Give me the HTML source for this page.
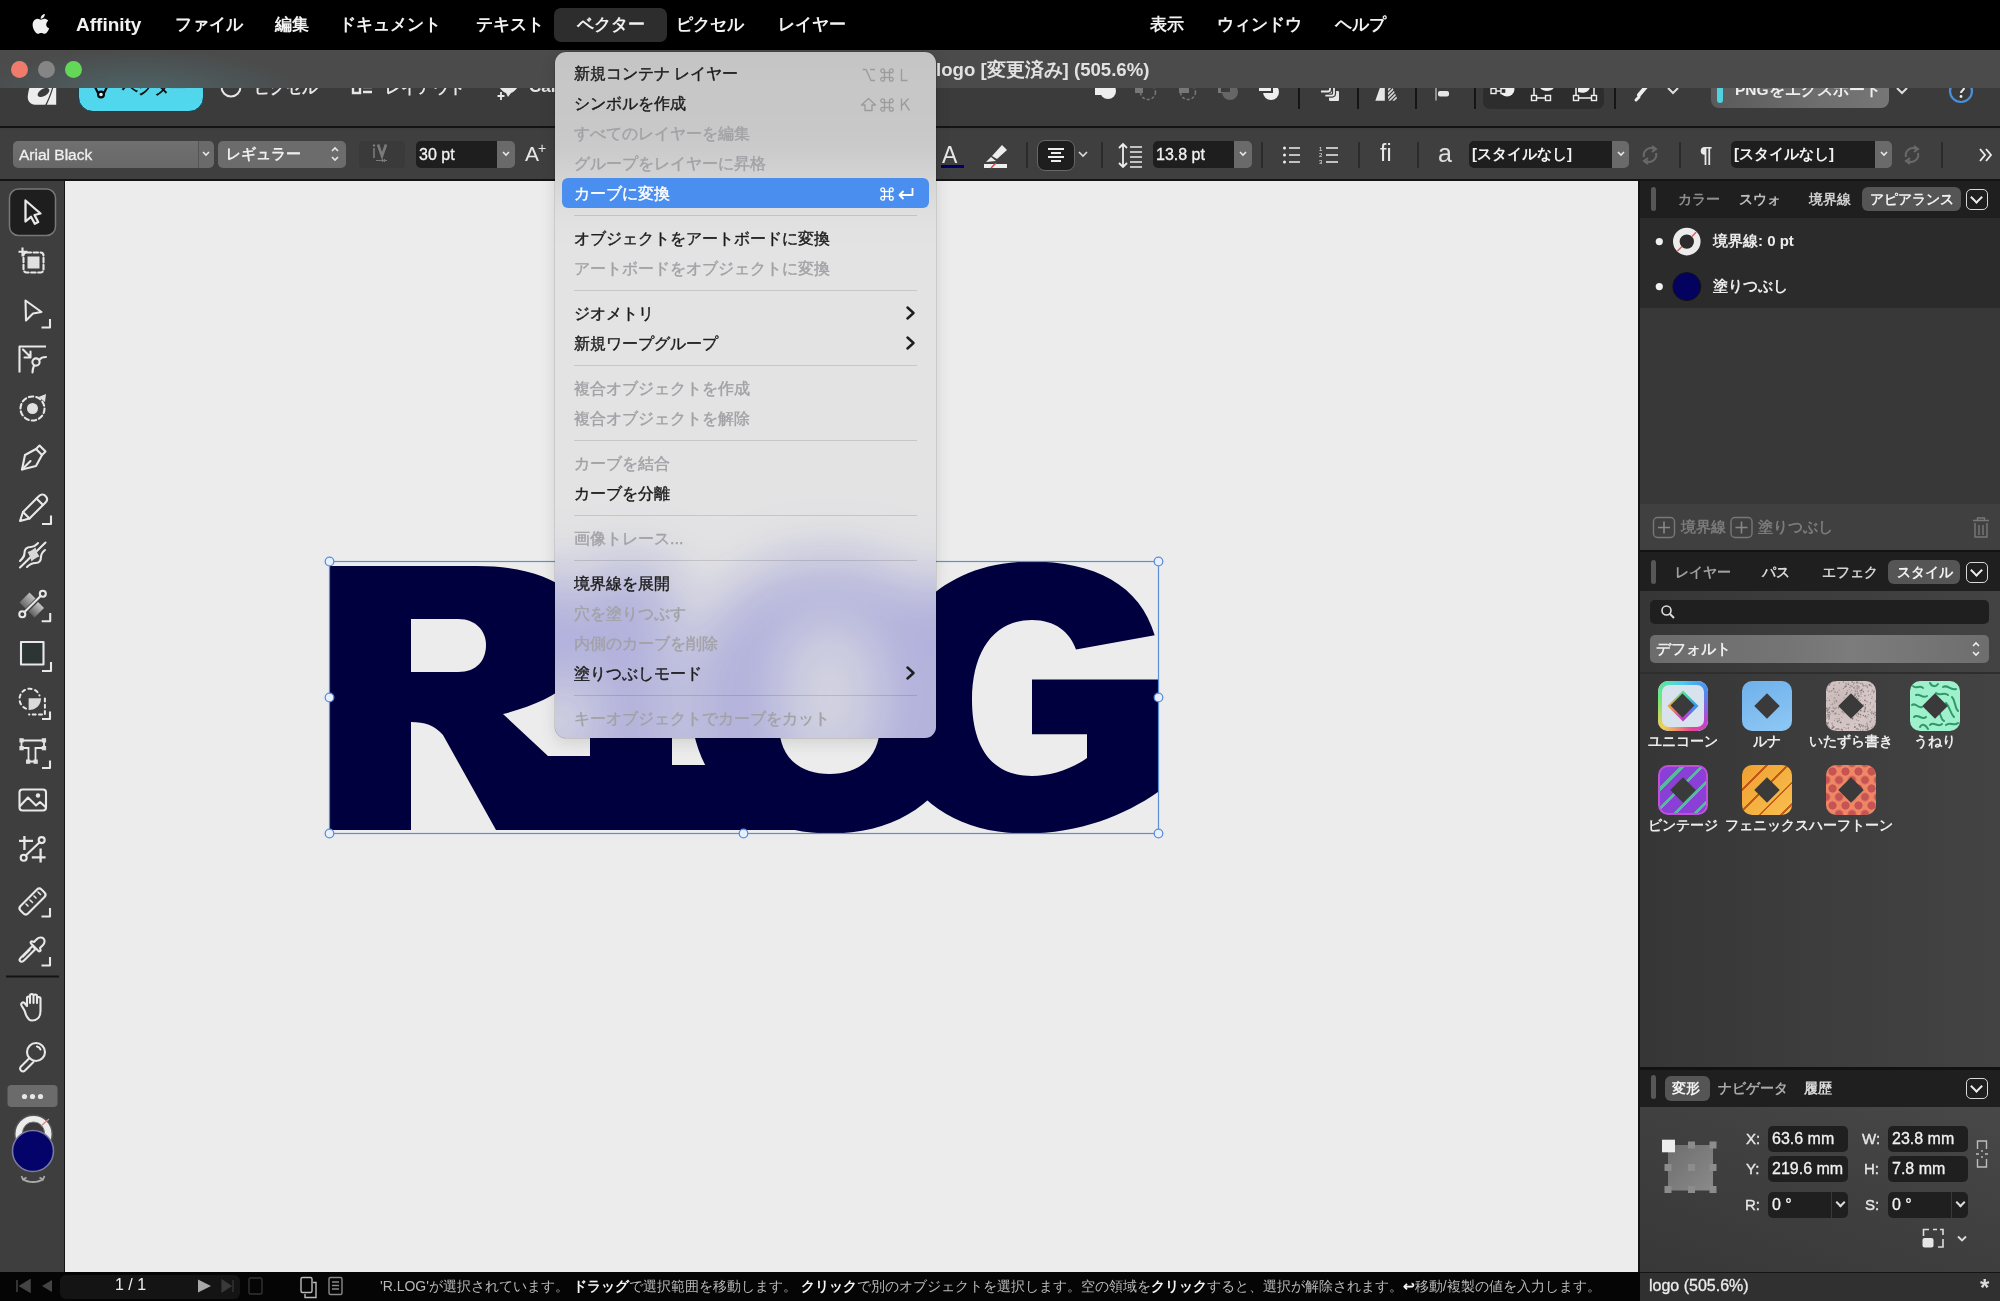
<!DOCTYPE html>
<html lang="ja">
<head>
<meta charset="utf-8">
<style>
*{box-sizing:border-box;margin:0;padding:0}
html,body{width:2000px;height:1301px;overflow:hidden;background:#3d3d3d;font-family:"Liberation Sans",sans-serif;-webkit-font-smoothing:antialiased;}
body{will-change:transform}
.a{position:absolute}
#menubar{left:0;top:0;width:2000px;height:50px;background:#000;color:#f2f2f2;font-size:17px;font-weight:600}
#menubar span{position:absolute;top:14px;line-height:22px;white-space:nowrap}
#titlebar{left:0;top:50px;width:2000px;height:38px;background:radial-gradient(ellipse 160px 40px at 140px 40px,rgba(80,120,125,0.55),rgba(75,75,75,0) 100%),#4b4b4b;z-index:5}
.tl{position:absolute;top:61px;width:17px;height:17px;border-radius:50%}
#toolbar{left:0;top:88px;width:2000px;height:40px;background:#3b3b3b;border-bottom:2px solid #141414}
#ctx{left:0;top:130px;width:2000px;height:51px;background:#3f3f3f;border-bottom:2px solid #141414}
#lp{left:0;top:181px;width:65px;height:1091px;background:#3e3e3e;border-right:1px solid #151515}
#canvas{left:65px;top:181px;width:1573px;height:1091px;background:#ececec;overflow:hidden}
#rp{left:1638px;top:179px;width:362px;height:1094px;background:#141414}
#status{left:0;top:1272px;width:1640px;height:29px;background:#050505}
#rstatus{left:1640px;top:1273px;width:360px;height:28px;background:#303030}
#menu{left:555px;top:52px;width:381px;height:686px;border-radius:11px;overflow:hidden;box-shadow:0 0 0 0.5px rgba(0,0,0,0.18),0 5px 16px rgba(0,0,0,0.12);z-index:20;font-size:16px;font-weight:400}
.mi{position:absolute;left:19px;height:30px;line-height:30px;color:#1c1c1c;white-space:nowrap;-webkit-text-stroke:0.4px #1c1c1c}
.mi.dis{color:#a2a2a6;-webkit-text-stroke:0.4px #a2a2a6}
.mi.hl{color:#fff;-webkit-text-stroke:0.4px #fff}
.mhl{position:absolute;left:7px;width:367px;height:30px;border-radius:6px;background:#4a8ff0}
.msc{position:absolute;right:26px;height:30px;line-height:30px;color:#a8a8a8;white-space:nowrap;font-weight:400;letter-spacing:2px}
.msc.hl{color:#fff}
.msep{position:absolute;left:19px;width:343px;height:1px;background:rgba(0,0,0,0.12)}
.rtab{position:absolute;font-size:14px;font-weight:600;line-height:22px;white-space:nowrap}
.chev{position:absolute;width:22px;height:21px;border:1.5px solid #d8d8d8;border-radius:5px}
.chev:after{content:"";position:absolute;left:5px;top:3px;width:7px;height:7px;border-right:2px solid #eee;border-bottom:2px solid #eee;transform:rotate(45deg)}
.rtxt{position:absolute;font-size:15px;line-height:20px;color:#ececec;white-space:nowrap}
.sic{width:50px;height:50px;border-radius:10px;overflow:hidden}
.slab{position:absolute;width:120px;text-align:center;font-size:14px;font-weight:600;color:#ececec;line-height:18px;white-space:nowrap}
.tlab{position:absolute;font-size:15px;color:#e8e8e8;font-weight:400;-webkit-text-stroke:0.35px #e8e8e8}
.tfld{position:absolute;height:25.5px;border-radius:5px;background:#1f1f1f;color:#f2f2f2;font-size:16px;line-height:25px;padding-left:4px;white-space:nowrap;-webkit-text-stroke:0.3px #f2f2f2}
.tarr{position:absolute;right:0;top:0;width:17px;height:25.5px;border-left:1px solid #3a3a3a}
.tarr:after{content:"";position:absolute;left:5px;top:7px;width:5px;height:5px;border-right:2px solid #ddd;border-bottom:2px solid #ddd;transform:rotate(45deg)}
</style>
</head>
<body>
<!-- menubar -->
<div id="menubar" class="a">
  <span style="left:554px;top:8px;width:113px;height:34px;background:#2d2d2d;border-radius:7px"></span>
  <svg class="a" style="left:30px;top:13px" width="20" height="22" viewBox="0 0 20 22"><path d="M16.2 11.6c0-2.5 2-3.7 2.1-3.8-1.2-1.7-3-1.9-3.6-2-1.5-.2-3 .9-3.8.9-.8 0-2-.9-3.3-.9-1.7 0-3.2 1-4.1 2.5-1.8 3-.5 7.5 1.3 10 .9 1.2 1.9 2.6 3.2 2.5 1.3-.1 1.8-.8 3.3-.8 1.6 0 2 .8 3.3.8 1.4 0 2.3-1.2 3.1-2.5 1-1.4 1.4-2.8 1.4-2.9-.1 0-2.9-1.1-2.9-3.8zM13.7 4.2c.7-.9 1.2-2 1.1-3.2-1.1 0-2.3.7-3 1.6-.7.8-1.2 2-1.1 3.1 1.1.1 2.3-.6 3-1.5z" fill="#f0f0f0"/></svg>
  <span style="left:76px;font-weight:700;font-size:19px">Affinity</span>
  <span style="left:175px">ファイル</span>
  <span style="left:275px">編集</span>
  <span style="left:339px">ドキュメント</span>
  <span style="left:476px">テキスト</span>
  <span style="left:577px">ベクター</span>
  <span style="left:676px">ピクセル</span>
  <span style="left:778px">レイヤー</span>
  <span style="left:1150px">表示</span>
  <span style="left:1217px">ウィンドウ</span>
  <span style="left:1335px">ヘルプ</span>
</div>

<!-- title bar -->
<div id="titlebar" class="a">
  <div style="position:absolute;left:936px;top:6.5px;font-size:18.6px;font-weight:700;color:#e2e2e2;white-space:nowrap">logo [変更済み] (505.6%)</div>
</div>
<div class="tl a" style="left:11px;background:#ef7b6d;z-index:6"></div>
<div class="tl a" style="left:38px;background:#858585;z-index:6"></div>
<div class="tl a" style="left:65px;background:#62d856;z-index:6"></div>

<!-- toolbar -->
<div id="toolbar" class="a">
  <svg class="a" style="left:0;top:0" width="70" height="22" viewBox="0 88 70 22"><path d="M30 86 H52.5 C50.5 94 47.5 100.5 45.3 104.7 L35 104.7 C30 104.7 27.3 100.5 27.8 96 C28.2 92 29.2 88.5 30 86 Z" fill="#ededed"/><ellipse cx="43.5" cy="92.5" rx="6.5" ry="3.6" transform="rotate(-32 43.5 92.5)" fill="#3b3b3b"/><path d="M53.8 86 H56.2 V104.7 H46.8 C49.8 98.5 52 92.5 53.8 86 Z" fill="#ededed"/></svg>
  <div class="a" style="left:78px;top:-14px;width:126px;height:37.5px;border-radius:15px;background:linear-gradient(180deg,#54d4ea,#4fd8ee);border:1px solid #1b3f4a"></div>
  <svg class="a" style="left:93px;top:0" width="16" height="14" viewBox="0 88 16 14"><path d="M1.5 86 L5.5 94 M14.5 86 L10.5 94" fill="none" stroke="#0a0a0a" stroke-width="2.2"/><circle cx="8" cy="94.5" r="2.9" fill="#d8f4f8" stroke="#0a0a0a" stroke-width="2.2"/></svg>
  <div class="a" style="left:122px;top:-10px;font-size:16px;font-weight:600;color:#101010;white-space:nowrap">ベクター</div>
  <svg class="a" style="left:220px;top:-12px" width="22" height="22" viewBox="0 0 22 22"><circle cx="11" cy="11" r="9.5" fill="none" stroke="#e6e6e6" stroke-width="2"/></svg>
  <div class="a" style="left:254px;top:-10px;font-size:16px;font-weight:600;color:#e6e6e6;white-space:nowrap">ピクセル</div>
  <svg class="a" style="left:351px;top:-4px" width="22" height="14" viewBox="0 0 22 14"><path d="M2 0 L2 9 L9 9 L9 0" fill="none" stroke="#e6e6e6" stroke-width="2.4"/><path d="M12 3 H21 M12 8 H21" stroke="#e6e6e6" stroke-width="2.4"/></svg>
  <div class="a" style="left:385px;top:-10px;font-size:16px;font-weight:600;color:#e6e6e6;white-space:nowrap">レイアウト</div>
  <svg class="a" style="left:496px;top:0" width="24" height="14" viewBox="0 88 24 14"><path d="M3 86 C7 86 10 87 12 88 C14 87 18 86 22 86 C21 89 18 92 15 93 L12 97 L10 93 C7 92 4 89 3 86 Z" fill="#e8e8e8"/><path d="M5 92 V100 M1.5 96 H8.5" stroke="#e8e8e8" stroke-width="1.8"/></svg>
  <div class="a" style="left:529px;top:-11px;font-size:17px;font-weight:600;color:#e6e6e6;white-space:nowrap">Canva</div>
  <!-- boolean icons -->
  <svg class="a" style="left:1094px;top:-3px" width="26" height="20" viewBox="0 0 26 20"><rect x="1" y="0" width="12" height="10" fill="#eee"/><circle cx="14" cy="6" r="8" fill="#eee"/></svg>
  <svg class="a" style="left:1134px;top:-3px" width="26" height="20" viewBox="0 0 26 20"><rect x="1" y="0" width="8" height="8" fill="#777"/><circle cx="14" cy="7" r="7.5" fill="none" stroke="#777" stroke-width="1.5" stroke-dasharray="3 2"/></svg>
  <svg class="a" style="left:1174px;top:-3px" width="26" height="20" viewBox="0 0 26 20"><rect x="5" y="0" width="10" height="8" fill="#777"/><circle cx="14" cy="7" r="7.5" fill="none" stroke="#777" stroke-width="1.5" stroke-dasharray="3 2"/></svg>
  <svg class="a" style="left:1217px;top:-3px" width="26" height="20" viewBox="0 0 26 20"><rect x="1" y="0" width="8" height="8" fill="#777"/><circle cx="13" cy="7" r="8" fill="#666"/><rect x="4" y="0" width="9" height="7" fill="#3b3b3b"/></svg>
  <svg class="a" style="left:1257px;top:-3px" width="26" height="20" viewBox="0 0 26 20"><circle cx="14" cy="7" r="8" fill="#eee"/><rect x="1" y="-2" width="14" height="9" fill="#eee" stroke="#3b3b3b" stroke-width="2"/></svg>
  <div class="a" style="left:1298px;top:0;width:2px;height:21px;background:#151515"></div>
  <svg class="a" style="left:1310px;top:0" width="40" height="20" viewBox="1310 88 40 20"><rect x="1329" y="91" width="10" height="10" rx="1" fill="#e6e6e6"/><path d="M1334 84 V93.6 Q1334 95.6 1332 95.6 H1325.4" fill="none" stroke="#3b3b3b" stroke-width="4.2"/><path d="M1334 84 V93.6 Q1334 95.6 1332 95.6 H1325.4" fill="none" stroke="#e6e6e6" stroke-width="1.8"/><path d="M1330 84 V89.5 Q1330 91.5 1328 91.5 H1321" fill="none" stroke="#3b3b3b" stroke-width="4.2"/><path d="M1330 84 V89.5 Q1330 91.5 1328 91.5 H1321" fill="none" stroke="#e6e6e6" stroke-width="1.8"/></svg>
  <div class="a" style="left:1357px;top:0;width:2px;height:21px;background:#151515"></div>
  <svg class="a" style="left:1370px;top:0" width="32" height="20" viewBox="1370 88 32 20"><path d="M1375.3 100.8 L1380.5 86 H1384.8 V100.8 Z" fill="#e6e6e6"/><defs><clipPath id="fl"><path d="M1388 86 H1392 L1398 100.8 H1388 Z"/></clipPath></defs><g clip-path="url(#fl)"><path d="M1386 92 L1393 85 M1386 96 L1395 87 M1386 100 L1397 89 M1389 101 L1399 91 M1393 101 L1400 94" stroke="#d8d8d8" stroke-width="1.6"/></g></svg>
  <div class="a" style="left:1415px;top:0;width:2px;height:21px;background:#151515"></div>
  <svg class="a" style="left:1430px;top:0" width="24" height="16" viewBox="1430 88 24 16"><path d="M1436 86 V100.5" stroke="#bdbdbd" stroke-width="1.3"/><rect x="1438" y="91" width="11" height="5.5" rx="2" fill="#e6e6e6"/></svg>
  <div class="a" style="left:1474px;top:0;width:2px;height:21px;background:#151515"></div>
  <div class="a" style="left:1483px;top:-4px;width:121px;height:25px;border-radius:7px;background:#2d2d2d"></div>
  <svg class="a" style="left:1490px;top:-6px" width="28" height="22" viewBox="0 0 28 22"><circle cx="17" cy="7" r="7.5" fill="#eee"/><path d="M2 9 H14" stroke="#2d2d2d" stroke-width="5"/><path d="M3 9 H14" stroke="#eee" stroke-width="1.5"/><rect x="1" y="6.5" width="5" height="5" fill="#2d2d2d" stroke="#eee" stroke-width="1.4"/><rect x="11" y="6.5" width="5" height="5" fill="#2d2d2d" stroke="#eee" stroke-width="1.4"/></svg>
  <svg class="a" style="left:1530px;top:-6px" width="28" height="22" viewBox="0 0 28 22"><ellipse cx="17" cy="3" rx="8" ry="6" fill="#eee"/><path d="M4 0 V16 H18" fill="none" stroke="#eee" stroke-width="1.5"/><rect x="1.5" y="13.5" width="5" height="5" fill="#2d2d2d" stroke="#eee" stroke-width="1.4"/><rect x="15.5" y="13.5" width="5" height="5" fill="#2d2d2d" stroke="#eee" stroke-width="1.4"/></svg>
  <svg class="a" style="left:1572px;top:-6px" width="28" height="22" viewBox="0 0 28 22"><path d="M6 0 V10 C12 12 18 10 18 4 V0 Z" fill="#eee"/><path d="M4 0 V16 H22 V0" fill="none" stroke="#eee" stroke-width="1.5"/><rect x="1.5" y="13.5" width="5" height="5" fill="#2d2d2d" stroke="#eee" stroke-width="1.4"/><rect x="19.5" y="13.5" width="5" height="5" fill="#2d2d2d" stroke="#eee" stroke-width="1.4"/></svg>
  <div class="a" style="left:1614px;top:0;width:2px;height:21px;background:#151515"></div>
  <svg class="a" style="left:1632px;top:-6px" width="22" height="22" viewBox="0 0 22 22"><path d="M18 0 L7 13" stroke="#eee" stroke-width="4" stroke-linecap="round"/><circle cx="3" cy="4" r="1.8" fill="#eee"/><path d="M4 18 L7 15" stroke="#eee" stroke-width="3" stroke-linecap="round"/></svg>
  <svg class="a" style="left:1666px;top:-2px" width="14" height="10" viewBox="0 0 14 10"><path d="M2 2 L7 7 L12 2" fill="none" stroke="#ddd" stroke-width="2"/></svg>
  <div class="a" style="left:1711px;top:-14px;width:178px;height:34px;border-radius:8px;background:linear-gradient(90deg,#5a5a5a,#6e6e6e 60%,#767676)"></div>
  <div class="a" style="left:1717px;top:-10px;width:6px;height:25px;border-radius:3px;background:#4fd3e0"></div>
  <div class="a" style="left:1735px;top:-8px;font-size:15.5px;font-weight:600;color:#eee;white-space:nowrap">PNGをエクスポート</div>
  <svg class="a" style="left:1895px;top:-2px" width="14" height="10" viewBox="0 0 14 10"><path d="M2 2 L7 7 L12 2" fill="none" stroke="#ddd" stroke-width="2"/></svg>
  <svg class="a" style="left:1946px;top:-10px" width="30" height="26" viewBox="0 0 30 26"><circle cx="15" cy="13" r="11" fill="none" stroke="#4a8fd8" stroke-width="2.2"/><path d="M12 10 C12 6.5 18 6.5 18 10 C18 12.5 15 12.5 15 15" fill="none" stroke="#eee" stroke-width="2"/><circle cx="15" cy="18.5" r="1.4" fill="#eee"/></svg>
</div>

<!-- context toolbar -->
<div id="ctx" class="a">
  <div class="a" style="left:13px;top:11px;width:185px;height:27px;border-radius:5px 0 0 5px;background:linear-gradient(180deg,#707070,#686868)"></div>
  <div class="a" style="left:198px;top:11px;width:16px;height:27px;border-radius:0 5px 5px 0;background:#6a6a6a;border-left:1px solid #555"></div>
  <div class="a" style="left:19px;top:16px;font-size:15.5px;color:#f0f0f0;white-space:nowrap;-webkit-text-stroke:0.3px #f0f0f0">Arial Black</div>
  <svg class="a" style="left:201px;top:20px" width="10" height="8" viewBox="0 0 10 8"><path d="M2 2 L5 5 L8 2" fill="none" stroke="#e8e8e8" stroke-width="1.6"/></svg>
  <div class="a" style="left:218px;top:11px;width:128px;height:27px;border-radius:5px;background:#6c6c6c"></div>
  <div class="a" style="left:226px;top:15px;font-size:15px;font-weight:600;color:#f0f0f0;white-space:nowrap">レギュラー</div>
  <svg class="a" style="left:330px;top:13px" width="10" height="22" viewBox="0 0 10 22"><path d="M2 8 L5 5 L8 8 M2 14 L5 17 L8 14" fill="none" stroke="#e8e8e8" stroke-width="1.6"/></svg>
  <div class="a" style="left:359px;top:11px;width:46px;height:27px;border-radius:4px;background:#3a3a3a"></div>
  <svg class="a" style="left:370px;top:13px" width="24" height="24" viewBox="0 0 24 24"><circle cx="4" cy="2.5" r="1.2" fill="#7a7a7a"/><path d="M4 5 V15" stroke="#7a7a7a" stroke-width="1.6"/><path d="M8 1.5 L12 13 L16 1.5" fill="none" stroke="#7a7a7a" stroke-width="2.6"/><path d="M6 17.5 H17 M12.5 16 V19 M14.5 16 V19" stroke="#7a7a7a" stroke-width="1.2"/></svg>
  <div class="a" style="left:416px;top:11px;width:82px;height:27px;border-radius:5px 0 0 5px;background:#1e1e1e"></div>
  <div class="a" style="left:497px;top:11px;width:18px;height:27px;border-radius:0 5px 5px 0;background:#6a6a6a"></div>
  <div class="a" style="left:419px;top:16px;font-size:16px;color:#f2f2f2;white-space:nowrap;-webkit-text-stroke:0.3px #f2f2f2">30 pt</div>
  <svg class="a" style="left:501px;top:20px" width="10" height="8" viewBox="0 0 10 8"><path d="M2 2 L5 5 L8 2" fill="none" stroke="#e8e8e8" stroke-width="1.6"/></svg>
  <div class="a" style="left:525px;top:12px;font-size:21px;color:#e8e8e8;white-space:nowrap">A<span style="font-size:14px;position:relative;top:-8px;left:-1px">+</span></div>
  <!-- right of menu -->
  <div class="a" style="left:942px;top:12px;font-size:23px;color:#e8e8e8">A</div>
  <div class="a" style="left:941px;top:35px;width:23px;height:3px;background:#000066"></div>
  <svg class="a" style="left:983px;top:12px" width="26" height="28" viewBox="0 0 26 28"><path d="M9 14 L19 3 L24 8 L14 17 Z" fill="#eee"/><path d="M8 15 L13 19 L3 20 Z" fill="#eee"/><rect x="1" y="22" width="23" height="4" fill="#eee"/><path d="M8 26 L13 21" stroke="#e04040" stroke-width="1.5"/></svg>
  <div class="a" style="left:1026px;top:12px;width:2px;height:26px;background:#2a2a2a"></div>
  <div class="a" style="left:1037px;top:10px;width:38px;height:31px;border-radius:8px;background:#1e1e1e;border:1.5px solid #676767"></div>
  <svg class="a" style="left:1045px;top:16px" width="22" height="18" viewBox="0 0 22 18"><path d="M3 3 H19 M6 7 H16 M3 11 H19 M6 15 H16" stroke="#eee" stroke-width="1.8"/></svg>
  <svg class="a" style="left:1077px;top:20px" width="12" height="9" viewBox="0 0 12 9"><path d="M2 2 L6 6 L10 2" fill="none" stroke="#ddd" stroke-width="1.6"/></svg>
  <div class="a" style="left:1101px;top:12px;width:2px;height:26px;background:#2a2a2a"></div>
  <svg class="a" style="left:1118px;top:12px" width="26" height="28" viewBox="0 0 26 28"><path d="M5 2 V25 M1 6 L5 2 L9 6 M1 21 L5 25 L9 21" fill="none" stroke="#eee" stroke-width="1.8"/><path d="M12 5 H24 M12 10 H24 M12 15 H24 M12 20 H24 M12 25 H24" stroke="#eee" stroke-width="1.6"/></svg>
  <div class="a" style="left:1153px;top:11px;width:82px;height:27px;border-radius:5px 0 0 5px;background:#1e1e1e"></div>
  <div class="a" style="left:1234px;top:11px;width:18px;height:27px;border-radius:0 5px 5px 0;background:#6a6a6a"></div>
  <div class="a" style="left:1156px;top:16px;font-size:16px;color:#f2f2f2;white-space:nowrap;-webkit-text-stroke:0.3px #f2f2f2">13.8 pt</div>
  <svg class="a" style="left:1238px;top:20px" width="10" height="8" viewBox="0 0 10 8"><path d="M2 2 L5 5 L8 2" fill="none" stroke="#e8e8e8" stroke-width="1.6"/></svg>
  <div class="a" style="left:1261px;top:12px;width:2px;height:26px;background:#2a2a2a"></div>
  <svg class="a" style="left:1282px;top:14px" width="20" height="22" viewBox="0 0 20 22"><circle cx="2.5" cy="4" r="1.5" fill="#eee"/><circle cx="2.5" cy="11" r="1.5" fill="#eee"/><circle cx="2.5" cy="18" r="1.5" fill="#eee"/><path d="M7 4 H18 M7 11 H18 M7 18 H18" stroke="#eee" stroke-width="1.6"/></svg>
  <svg class="a" style="left:1319px;top:14px" width="20" height="22" viewBox="0 0 20 22"><text x="0" y="6.5" font-size="6" fill="#eee" font-family="Liberation Sans">1</text><text x="0" y="13" font-size="6" fill="#eee" font-family="Liberation Sans">2</text><text x="0" y="20" font-size="6" fill="#eee" font-family="Liberation Sans">3</text><path d="M7 4 H19 M7 11 H19 M7 18 H19" stroke="#eee" stroke-width="1.6"/></svg>
  <div class="a" style="left:1358px;top:12px;width:2px;height:26px;background:#2a2a2a"></div>
  <div class="a" style="left:1380px;top:10px;font-size:23px;color:#e8e8e8">fi</div>
  <div class="a" style="left:1417px;top:12px;width:2px;height:26px;background:#2a2a2a"></div>
  <div class="a" style="left:1438px;top:9px;font-size:25px;color:#e0e0e0">a</div>
  <div class="a" style="left:1469px;top:11px;width:144px;height:27px;border-radius:5px 0 0 5px;background:#1e1e1e"></div>
  <div class="a" style="left:1612px;top:11px;width:17px;height:27px;border-radius:0 5px 5px 0;background:#6a6a6a"></div>
  <div class="a" style="left:1472px;top:15px;font-size:15px;font-weight:600;color:#f2f2f2;white-space:nowrap">[スタイルなし]</div>
  <svg class="a" style="left:1616px;top:20px" width="10" height="8" viewBox="0 0 10 8"><path d="M2 2 L5 5 L8 2" fill="none" stroke="#e8e8e8" stroke-width="1.6"/></svg>
  <svg class="a" style="left:1640px;top:14px" width="20" height="22" viewBox="0 0 20 22"><path d="M4 13 A7 7 0 0 1 14 5 M16 9 A7 7 0 0 1 6 17" fill="none" stroke="#6a6a6a" stroke-width="2"/><path d="M12 2 L16 5 L12 8 M8 14 L4 17 L8 20" fill="none" stroke="#6a6a6a" stroke-width="2"/></svg>
  <div class="a" style="left:1679px;top:12px;width:2px;height:26px;background:#2a2a2a"></div>
  <div class="a" style="left:1700px;top:12px;font-size:22px;font-weight:700;color:#e8e8e8">¶</div>
  <div class="a" style="left:1731px;top:11px;width:145px;height:27px;border-radius:5px 0 0 5px;background:#1e1e1e"></div>
  <div class="a" style="left:1875px;top:11px;width:17px;height:27px;border-radius:0 5px 5px 0;background:#6a6a6a"></div>
  <div class="a" style="left:1734px;top:15px;font-size:15px;font-weight:600;color:#f2f2f2;white-space:nowrap">[スタイルなし]</div>
  <svg class="a" style="left:1879px;top:20px" width="10" height="8" viewBox="0 0 10 8"><path d="M2 2 L5 5 L8 2" fill="none" stroke="#e8e8e8" stroke-width="1.6"/></svg>
  <svg class="a" style="left:1902px;top:14px" width="20" height="22" viewBox="0 0 20 22"><path d="M4 13 A7 7 0 0 1 14 5 M16 9 A7 7 0 0 1 6 17" fill="none" stroke="#6a6a6a" stroke-width="2"/><path d="M12 2 L16 5 L12 8 M8 14 L4 17 L8 20" fill="none" stroke="#6a6a6a" stroke-width="2"/></svg>
  <div class="a" style="left:1941px;top:12px;width:2px;height:26px;background:#2a2a2a"></div>
  <svg class="a" style="left:1978px;top:17px" width="16" height="16" viewBox="0 0 16 16"><path d="M2 2 L7 8 L2 14 M8 2 L13 8 L8 14" fill="none" stroke="#eee" stroke-width="1.8"/></svg>
</div>

<!-- left panel -->
<div id="lp" class="a">
<svg class="a" style="left:0;top:-181px" width="65" height="1272" viewBox="0 0 65 1272">
 <rect x="9.5" y="189" width="46" height="46.5" rx="9" fill="#1e1e1e" stroke="#787878" stroke-width="1.5"/>
 <g fill="none" stroke="#e8e8e8" stroke-width="2.1" stroke-linejoin="round" stroke-linecap="round">
  <!-- 1 select -->
  <path d="M25.5 200.5 L40.5 213.5 L34.5 215 L38.2 222 L34.8 223.8 L31 216.8 L25.5 221.5 Z" stroke-width="2.3"/>
  <!-- 2 marquee -->
  <path d="M22.5 247.5 V256.5 M18.5 251.8 H27.5" stroke-linecap="butt"/>
  <rect x="23.5" y="252.5" width="20" height="20" rx="3" stroke-dasharray="4.5 2.5"/>
  <!-- 3 node -->
  <path d="M25.5 300.5 L41.5 312 L33 313.5 L26 320.5 Z"/>
  <path d="M50 319 V327.5 H41.5" stroke-linecap="butt"/>
  <!-- 4 corner -->
  <path d="M19.5 372.5 V346.5 H46" stroke-linecap="butt"/>
  <path d="M23 349.5 L30.5 357 M24.5 357.5 H30.5 V351.5"/>
  <circle cx="36" cy="362" r="3.6"/>
  <path d="M39.5 359.5 C41 357.5 43 357 46 357 M34 365.5 C33 368 32.5 370 32.5 372.5"/>
  <!-- 5 dashed circle -->
  <circle cx="32.5" cy="408.5" r="12" stroke-dasharray="4.5 3"/>
  <!-- 6 pen -->
  <path d="M22 469.5 L25 455 L36 449 L42 455 L36 466 Z"/>
  <path d="M36 449 L39.5 445.5 L45.5 451.5 L42 455"/>
  <path d="M22 469.5 L30.5 461"/>
  <!-- 7 pencil -->
  <path d="M20 521 L23 512 L39 496 C41 494 44 494 45.5 496 C47.5 498 47.5 500.5 45.5 502.5 L29.5 518.5 Z"/>
  <path d="M23 512 L29.5 518.5 M36.5 498.5 L43 505"/>
  <path d="M51 515.5 V524 H42" stroke-linecap="butt"/>
  <!-- 8 brush -->
  <path d="M20 567.5 L45.5 542.5"/>
  <path d="M20 561 C23 558 24.5 556.5 24.5 553 C24.5 549 27 547 31 547 C35 547 36 545 38 543"/>
  <path d="M27 567 C30 564 32 563 35.5 563 C39.5 563 41 560.5 41 557 C41 553.5 42.5 552 45 550"/>
  <!-- 9 fill -->
  <circle cx="22.3" cy="614.2" r="3"/>
  <circle cx="42.8" cy="593.7" r="3"/>
  <path d="M24.5 612 L40.6 595.9"/>
  <path d="M50.2 613 V621.3 H41.7" stroke-linecap="butt"/>
  <!-- 10 rect -->
  <rect x="21" y="642" width="22.5" height="22.5" fill="#2d3434"/>
  <path d="M51 662 V671 H42" stroke-linecap="butt"/>
  <!-- 11 ellipse quarter -->
  <path d="M26 708.6 A10.3 10.3 0 1 1 39.5 695.5" stroke-dasharray="3.2 3.5" stroke-width="2"/>
  <path d="M44.9 698.5 V714.5 H29" stroke-dasharray="3 3.3" stroke-width="2"/>
  <path d="M50 711.5 V719 H42" stroke-linecap="butt"/>
  <!-- 12 T -->
  <path d="M21.5 740.5 H44 V748 H35.5 V761.5 H28.5 V748 H21.5 Z" stroke-width="1.8" stroke-linecap="butt" stroke-linejoin="miter"/>
  <path d="M50 760.5 V768 H42" stroke-linecap="butt"/>
  <!-- 13 image -->
  <rect x="19.5" y="789.5" width="26.5" height="21" rx="3"/>
  <path d="M20 806 L28 797.5 L36 805.5 L40 802 L45.5 807"/>
  <!-- 14 plus line -->
  <path d="M19 840.8 H33 M24.4 836 V850 M31.8 857.4 H45.6 M40.6 848.6 V862.4" stroke-linecap="butt" stroke-width="2.3"/>
  <circle cx="23.7" cy="857.8" r="3"/>
  <circle cx="41.7" cy="840.1" r="3"/>
  <path d="M25.8 855.6 L39.6 842.3"/>
  <!-- 15 ruler -->
  <path d="M20.5 906 L37 889.5 C38.5 888 40 888 41.5 889.5 L44.5 892.5 C46 894 46 895.5 44.5 897 L28 913.5 C26.5 915 25 915 23.5 913.5 L20.5 910.5 C19 909 19 907.5 20.5 906 Z"/>
  <path d="M26 904 L28 906 M30 900 L32.5 902.5 M34 896 L36 898 M38 892 L40.5 894.5" stroke-width="1.6"/>
  <path d="M50 908 V916.5 H41.5" stroke-linecap="butt"/>
  <!-- 16 eyedropper -->
  <path d="M21 957.5 L32.5 946 L35.5 949 L24 960.5 C22.5 962 21 962 20 961 C19 960 19.5 959 21 957.5 Z"/>
  <path d="M23 957 L30 950" stroke-width="1.3"/>
  <path d="M31 943.5 C30 942.5 31 941 32.5 941.5 L34 942 L37 939 C39 937 42 937 43.5 938.5 C45 940 45 943 43 945 L40 948 L40.5 949.5 C41 951 39.5 952 38.5 951 Z"/>
  <path d="M50 957 V965.5 H41.5" stroke-linecap="butt"/>
  <!-- 17 hand -->
  <path d="M24.5 1010.5 L21.5 1005.5 C20.5 1003.5 22.5 1001.5 24.5 1003 L27 1006 V998 C27 996 30 996 30 998 V1003 V995.5 C30 993.5 33.5 993.5 33.5 995.5 V1003 V996 C33.5 994 37 994 37 996 V1003 V998.5 C37 996.5 40.5 996.5 40.5 998.5 V1011 C40.5 1017 37 1020.5 32 1020.5 C28.5 1020.5 26.5 1018 24.5 1010.5 Z"/>
  <!-- 18 zoom -->
  <circle cx="36" cy="1052" r="9"/>
  <path d="M37 1046.5 C38.5 1046.8 40 1048 40.5 1049.5"/>
  <path d="M29.5 1058 L21 1066.5 C19.8 1067.7 19.8 1069.3 21 1070.5 C22.2 1071.7 23.8 1071.7 25 1070.5 L33.5 1062"/>
 </g>
 <!-- fills -->
 <rect x="27.5" y="256.5" width="12" height="12" fill="#e0e0e0"/>
 <circle cx="32.5" cy="408.5" r="5.5" fill="#e0e0e0"/>
 <path d="M38.5 397 L46 394 L45 402 Z" fill="#e0e0e0"/>
 <path d="M27.5 552 C30.5 551 33 550 35.5 547.5 C36.5 551 37.5 554 39.5 556.5 C36.5 557.5 34 559 31.5 561.5 C30.5 558 29.5 555 27.5 552 Z" fill="#d8d8d8"/>
 <defs><linearGradient id="gf2" x1="1" y1="0" x2="0" y2="1"><stop offset="0" stop-color="#d8d8d8"/><stop offset="1" stop-color="#505050"/></linearGradient></defs>
 <path d="M19.5 602.5 L29.5 592.5 L35.5 598.5 L25.5 608.5 Z" fill="url(#gf2)"/>
 <path d="M31 614 L40.5 604.5 L44 608 L34.5 617.5 Z" fill="url(#gf2)"/><path d="M28.5 611.5 L38 602 L41 605 L31.5 614.5 Z" fill="url(#gf2)"/>
 <path d="M28.6 698.2 H41 C41 705 36 710 28.6 710 Z" fill="#dadada"/>
 <g fill="#e0e0e0"><rect x="19.4" y="738.2" width="4.3" height="4.3"/><rect x="41.8" y="738.2" width="4.3" height="4.3"/><rect x="19.4" y="746" width="4.3" height="4.3"/><rect x="41.8" y="746" width="4.3" height="4.3"/><rect x="26" y="759.5" width="4.3" height="4.3"/><rect x="33.5" y="759.5" width="4.3" height="4.3"/></g>
 <circle cx="38" cy="795.5" r="2.2" fill="#e8e8e8"/>
 <path d="M6 976.5 H59" stroke="#141414" stroke-width="2"/>
 <!-- more button -->
 <rect x="7.5" y="1085" width="50" height="22" rx="4" fill="#6b6b6b"/>
 <circle cx="24.5" cy="1096.5" r="2.6" fill="#e6e6e6"/><circle cx="32.5" cy="1096.5" r="2.6" fill="#e6e6e6"/><circle cx="40.5" cy="1096.5" r="2.6" fill="#e6e6e6"/>
 <!-- colors -->
 <circle cx="33.5" cy="1134" r="19.5" fill="#555"/>
 <circle cx="33.5" cy="1134" r="18" fill="#ececec"/>
 <circle cx="33.5" cy="1133" r="11" fill="#3a3a3a" stroke="#777" stroke-width="1"/>
 <path d="M41 1126 L49 1119" stroke="#e08080" stroke-width="1.2"/>
 <circle cx="33" cy="1151" r="20.5" fill="#03036a" stroke="#7a7a9e" stroke-width="1.6"/>
 <path d="M23 1179 C28 1183 38 1183 43 1179 M21.5 1176 L23 1179.5 L26.5 1177.5 M44.5 1176 L43 1179.5 L39.5 1177.5" fill="none" stroke="#a8a8a8" stroke-width="1.8"/>
</svg>
</div>

<!-- canvas -->
<div id="canvas" class="a">
<svg class="a" style="left:0;top:0" width="1573" height="1091" viewBox="65 181 1573 1091">
 <g fill="#00003f">
  <path d="M329.5 566 H477 C545 566 592 592 592 640 C592 672 560 700 503 714 L548 756 H590 V566 H672 V765 H830 V830 H496 L443 735 C434 725 425 722 411 722 V830 H329.5 Z"/>
  <path d="M830 561.5 C915 561.5 970 620 970 697 C970 780 915 833.5 830 833.5 C745 833.5 690 780 690 697 C690 620 745 561.5 830 561.5 Z"/>
  <path d="M1154.7 635.3 C1140 585 1095 561.5 1030 561.5 C940 561.5 885 625 885 697 C885 785 945 833.5 1025 833.5 C1080 833.5 1125 815 1158 792 V679.4 H1032 V734.2 H1087 V758 C1070 770 1050 776 1032 776 C990 776 972 745 972 700 C972 650 995 620 1032 620 C1055 620 1070 632 1076 649.6 Z"/>
 </g>
 <g fill="#ececec">
  <path d="M411 619 H458 C477 619 486 632 486 645 C486 660 477 672 458 672 H411 Z"/>
  <path d="M779 660 C779 630 800 618 829.5 618 C859 618 880 630 880 660 V724 C880 758 859 774 829.5 774 C800 774 779 758 779 724 Z"/>
 </g>
 <g fill="none" stroke="#5b8fd8" stroke-width="1.2">
  <rect x="329.5" y="561.5" width="829" height="272"/>
 </g>
 <g fill="#e8f0ff" stroke="#5b8fd8" stroke-width="1.3">
  <circle cx="329.5" cy="561.5" r="4.3"/><circle cx="1158.5" cy="561.5" r="4.3"/>
  <circle cx="329.5" cy="833.5" r="4.3"/><circle cx="1158.5" cy="833.5" r="4.3"/>
  <circle cx="329.5" cy="697.5" r="4.3"/><circle cx="1158.5" cy="697.5" r="4.3"/>
  <circle cx="743.5" cy="833.5" r="4.3"/><circle cx="743.5" cy="561.5" r="4.3"/>
 </g>
</svg>
</div>

<!-- right panel -->
<div id="rp" class="a">
 <!-- appearance panel: tabs -->
 <div class="a" style="left:2px;top:2px;width:360px;height:37px;background:#1f1f1f"></div>
 <div class="a" style="left:13px;top:8px;width:5px;height:24px;border-radius:3px;background:#575757"></div>
 <div class="rtab" style="left:40px;top:9px;color:#8e8e8e">カラー</div>
 <div class="rtab" style="left:101px;top:9px;color:#bdbdbd">スウォ</div>
 <div class="rtab" style="left:171px;top:9px;color:#cfcfcf">境界線</div>
 <div class="a" style="left:224px;top:8px;width:99px;height:24px;border-radius:6px;background:#555"></div>
 <div class="rtab" style="left:232px;top:9px;color:#f2f2f2">アピアランス</div>
 <div class="chev" style="left:328px;top:9.5px"></div>
 <!-- rows -->
 <div class="a" style="left:2px;top:39px;width:360px;height:90px;background:#2b2b2b"></div>
 <div class="a" style="left:2px;top:129px;width:360px;height:196px;background:#383838"></div>
 <div class="a" style="left:2px;top:325px;width:360px;height:46px;background:#404040"></div>
 <svg class="a" style="left:0;top:0" width="362" height="372" viewBox="1638 179 362 372">
  <circle cx="1659.3" cy="241.6" r="3.6" fill="#f0f0f0"/>
  <circle cx="1686.8" cy="241.6" r="10.5" fill="none" stroke="#ececec" stroke-width="6.6"/>
  <path d="M1677.5 250.9 L1682 246.4 M1691.6 236.8 L1696.1 232.3" stroke="#e05a5a" stroke-width="1.4"/>
  <circle cx="1659.3" cy="286.6" r="3.6" fill="#f0f0f0"/>
  <circle cx="1686.8" cy="286.6" r="14" fill="#03035f" stroke="#111" stroke-width="1"/>
  <rect x="1653.5" y="517.5" width="21" height="20" rx="4" fill="none" stroke="#777" stroke-width="1.4"/>
  <path d="M1664 521.5 V533.5 M1658 527.5 H1670" stroke="#888" stroke-width="1.6"/>
  <rect x="1731" y="517.5" width="21" height="20" rx="4" fill="none" stroke="#777" stroke-width="1.4"/>
  <path d="M1741.5 521.5 V533.5 M1735.5 527.5 H1747.5" stroke="#888" stroke-width="1.6"/>
  <path d="M1973 520.5 H1989 M1977.5 520.5 V518 H1984.5 V520.5 M1975 523 V537 H1987 V523 M1979 525 V535 M1983 525 V535" fill="none" stroke="#777" stroke-width="1.4"/>
 </svg>
 <div class="rtxt" style="left:75px;top:52px;font-weight:600">境界線: 0 pt</div>
 <div class="rtxt" style="left:75px;top:97px;font-weight:600">塗りつぶし</div>
 <div class="rtxt" style="left:43px;top:338px;color:#7a7a7a;font-weight:600">境界線</div>
 <div class="rtxt" style="left:120px;top:338px;color:#7a7a7a;font-weight:600">塗りつぶし</div>

 <!-- styles panel -->
 <div class="a" style="left:2px;top:371px;width:360px;height:2px;background:#121212"></div>
 <div class="a" style="left:2px;top:373px;width:360px;height:39px;background:#1f1f1f"></div>
 <div class="a" style="left:13px;top:381px;width:5px;height:24px;border-radius:3px;background:#575757"></div>
 <div class="rtab" style="left:37px;top:382px;color:#a0a0a0">レイヤー</div>
 <div class="rtab" style="left:124px;top:382px;color:#d8d8d8">パス</div>
 <div class="rtab" style="left:184px;top:382px;color:#d0d0d0">エフェク</div>
 <div class="a" style="left:250px;top:381px;width:72px;height:24px;border-radius:6px;background:#555"></div>
 <div class="rtab" style="left:259px;top:382px;color:#f2f2f2">スタイル</div>
 <div class="chev" style="left:328px;top:383px"></div>
 <div class="a" style="left:2px;top:412px;width:360px;height:476px;background:linear-gradient(90deg,#363636,#3d3d3d 50%,#434343)"></div>
 <div class="a" style="left:12px;top:421px;width:339px;height:24px;border-radius:5px;background:#1f1f1f"></div>
 <svg class="a" style="left:22px;top:425px" width="16" height="16" viewBox="0 0 16 16"><circle cx="6.5" cy="6.5" r="4.5" fill="none" stroke="#ddd" stroke-width="1.6"/><path d="M10 10 L14 14" stroke="#ddd" stroke-width="2"/></svg>
 <div class="a" style="left:12px;top:456px;width:339px;height:28px;border-radius:5px;background:linear-gradient(90deg,#6c6c6c,#747474 40%,#7c7c7c 60%,#6e6e6e)"></div>
 <div class="rtxt" style="left:18px;top:460px;font-weight:600;color:#eee">デフォルト</div>
 <svg class="a" style="left:332px;top:459px" width="12" height="22" viewBox="0 0 12 22"><path d="M3 8 L6 5 L9 8 M3 14 L6 17 L9 14" fill="none" stroke="#eee" stroke-width="1.6"/></svg>
 <div class="a" style="left:2px;top:493px;width:360px;height:1.5px;background:#2e2e2e"></div>
 <div class="a sic" style="left:19.7px;top:501.8px;background:linear-gradient(135deg,#dfe8f2,#d6e2ee)"><div class="a" style="left:0;top:0;width:50px;height:50px;border-radius:10px;background:conic-gradient(from 0deg,#50c8f0,#4890f0 15%,#c040d0 35%,#e84890 45%,#f0d050 62%,#70e878 80%,#50e0c0 92%,#50c8f0)"></div><div class="a" style="left:4px;top:4px;width:42px;height:42px;border-radius:7px;background:#d9e3ee"></div><div class="a" style="left:14px;top:14px;width:22px;height:22px;transform:rotate(45deg);background:conic-gradient(from 45deg,#3898f0,#c038c8 25%,#f0a040 50%,#50e090 75%,#3898f0)"></div><div class="a" style="left:16.5px;top:16.5px;width:17px;height:17px;transform:rotate(45deg);background:#3a3a3a"></div></div>
 <div class="slab" style="left:-15.3px;top:553.0px">ユニコーン</div>
 <div class="a sic" style="left:104.0px;top:501.8px;background:linear-gradient(160deg,#6fb1ec,#8ec8f4)"><div class="a" style="left:16.0px;top:16.0px;width:18px;height:18px;transform:rotate(45deg);background:#3a3a3a"></div></div>
 <div class="slab" style="left:69.0px;top:553.0px">ルナ</div>
 <div class="a sic" style="left:188.4px;top:501.8px;background:radial-gradient(circle at 30% 40%,#c9b9b9,#d7c6c6 60%,#cdbcbc)"><svg class="a" style="left:0;top:0" width="50" height="50" viewBox="0 0 50 50"><circle cx="3.6" cy="26.8" r="0.7" fill="#8a8080"/><circle cx="45.5" cy="10.7" r="0.5" fill="#a89e9e"/><circle cx="20.9" cy="12.0" r="0.9" fill="#8a8080"/><circle cx="41.3" cy="6.2" r="0.6" fill="#8a8080"/><circle cx="28.9" cy="19.8" r="0.6" fill="#8a8080"/><circle cx="27.8" cy="6.7" r="0.9" fill="#9a9090"/><circle cx="27.0" cy="28.5" r="0.6" fill="#8a8080"/><circle cx="29.1" cy="31.9" r="0.7" fill="#8a8080"/><circle cx="27.4" cy="3.1" r="0.5" fill="#9a9090"/><circle cx="24.8" cy="26.6" r="0.7" fill="#a89e9e"/><circle cx="29.3" cy="22.7" r="0.7" fill="#9a9090"/><circle cx="39.7" cy="34.9" r="0.6" fill="#8a8080"/><circle cx="28.7" cy="26.3" r="0.7" fill="#a89e9e"/><circle cx="14.4" cy="49.0" r="0.5" fill="#a89e9e"/><circle cx="8.2" cy="17.1" r="0.9" fill="#a89e9e"/><circle cx="2.0" cy="33.4" r="0.7" fill="#7a7272"/><circle cx="34.8" cy="29.7" r="0.9" fill="#8a8080"/><circle cx="42.0" cy="47.2" r="0.9" fill="#8a8080"/><circle cx="3.0" cy="35.1" r="0.9" fill="#7a7272"/><circle cx="35.8" cy="44.4" r="0.7" fill="#8a8080"/><circle cx="47.0" cy="17.8" r="0.5" fill="#a89e9e"/><circle cx="2.9" cy="38.4" r="0.6" fill="#9a9090"/><circle cx="8.3" cy="20.1" r="0.7" fill="#9a9090"/><circle cx="41.0" cy="43.2" r="0.7" fill="#a89e9e"/><circle cx="49.3" cy="34.1" r="0.9" fill="#9a9090"/><circle cx="7.5" cy="8.8" r="0.6" fill="#9a9090"/><circle cx="0.6" cy="41.6" r="0.6" fill="#7a7272"/><circle cx="30.5" cy="15.9" r="0.6" fill="#8a8080"/><circle cx="22.8" cy="43.5" r="0.9" fill="#a89e9e"/><circle cx="19.9" cy="5.2" r="0.9" fill="#8a8080"/><circle cx="9.5" cy="49.2" r="0.9" fill="#9a9090"/><circle cx="5.5" cy="30.0" r="0.5" fill="#8a8080"/><circle cx="28.3" cy="26.8" r="0.7" fill="#8a8080"/><circle cx="3.5" cy="10.4" r="0.9" fill="#9a9090"/><circle cx="31.7" cy="47.8" r="0.7" fill="#a89e9e"/><circle cx="6.1" cy="42.4" r="0.9" fill="#a89e9e"/><circle cx="24.2" cy="4.3" r="0.5" fill="#7a7272"/><circle cx="37.0" cy="23.9" r="0.6" fill="#8a8080"/><circle cx="10.3" cy="47.6" r="0.7" fill="#9a9090"/><circle cx="34.5" cy="45.7" r="0.7" fill="#8a8080"/><circle cx="34.8" cy="13.1" r="0.7" fill="#9a9090"/><circle cx="25.1" cy="31.8" r="0.6" fill="#9a9090"/><circle cx="40.9" cy="37.0" r="0.6" fill="#9a9090"/><circle cx="25.9" cy="17.8" r="0.5" fill="#8a8080"/><circle cx="39.5" cy="23.6" r="0.6" fill="#7a7272"/><circle cx="22.4" cy="46.9" r="0.7" fill="#8a8080"/><circle cx="10.2" cy="31.2" r="0.5" fill="#a89e9e"/><circle cx="45.5" cy="17.2" r="0.5" fill="#8a8080"/><circle cx="45.5" cy="39.1" r="0.6" fill="#a89e9e"/><circle cx="44.5" cy="21.7" r="0.7" fill="#8a8080"/><circle cx="40.0" cy="48.6" r="0.9" fill="#a89e9e"/><circle cx="20.1" cy="47.3" r="0.6" fill="#9a9090"/><circle cx="1.4" cy="29.5" r="0.9" fill="#9a9090"/><circle cx="30.6" cy="29.8" r="0.9" fill="#7a7272"/><circle cx="7.8" cy="27.4" r="0.5" fill="#8a8080"/><circle cx="40.0" cy="36.3" r="0.5" fill="#9a9090"/><circle cx="21.7" cy="43.6" r="0.6" fill="#8a8080"/><circle cx="29.3" cy="13.0" r="0.9" fill="#9a9090"/><circle cx="3.0" cy="37.0" r="0.9" fill="#a89e9e"/><circle cx="41.4" cy="43.9" r="0.6" fill="#9a9090"/><circle cx="26.2" cy="0.9" r="0.9" fill="#9a9090"/><circle cx="30.4" cy="38.8" r="0.6" fill="#9a9090"/><circle cx="7.1" cy="31.0" r="0.5" fill="#8a8080"/><circle cx="39.2" cy="5.3" r="0.5" fill="#9a9090"/><circle cx="22.6" cy="1.4" r="0.5" fill="#a89e9e"/><circle cx="16.3" cy="48.7" r="0.6" fill="#7a7272"/><circle cx="22.6" cy="26.7" r="0.9" fill="#9a9090"/><circle cx="35.0" cy="43.8" r="0.7" fill="#9a9090"/><circle cx="42.0" cy="6.9" r="0.5" fill="#a89e9e"/><circle cx="22.1" cy="3.6" r="0.6" fill="#a89e9e"/><circle cx="3.7" cy="33.5" r="0.5" fill="#9a9090"/><circle cx="47.0" cy="32.2" r="0.7" fill="#9a9090"/><circle cx="37.3" cy="4.7" r="0.9" fill="#9a9090"/><circle cx="49.5" cy="41.6" r="0.6" fill="#a89e9e"/><circle cx="49.7" cy="20.2" r="0.9" fill="#9a9090"/><circle cx="16.9" cy="22.9" r="0.9" fill="#7a7272"/><circle cx="25.9" cy="14.8" r="0.5" fill="#8a8080"/><circle cx="49.3" cy="39.4" r="0.5" fill="#8a8080"/><circle cx="13.3" cy="2.0" r="0.7" fill="#9a9090"/><circle cx="41.0" cy="42.5" r="0.7" fill="#a89e9e"/><circle cx="7.5" cy="46.0" r="0.9" fill="#7a7272"/><circle cx="4.5" cy="2.9" r="0.6" fill="#a89e9e"/><circle cx="44.8" cy="13.4" r="0.5" fill="#8a8080"/><circle cx="40.1" cy="4.2" r="0.6" fill="#8a8080"/><circle cx="49.7" cy="20.9" r="0.7" fill="#9a9090"/><circle cx="2.2" cy="35.5" r="0.5" fill="#9a9090"/><circle cx="13.1" cy="9.1" r="0.7" fill="#9a9090"/><circle cx="17.4" cy="0.9" r="0.7" fill="#8a8080"/><circle cx="0.8" cy="36.7" r="0.6" fill="#a89e9e"/><circle cx="32.5" cy="32.8" r="0.9" fill="#7a7272"/><circle cx="34.4" cy="49.1" r="0.7" fill="#9a9090"/><circle cx="41.6" cy="35.3" r="0.6" fill="#a89e9e"/><circle cx="49.5" cy="49.1" r="0.6" fill="#8a8080"/><circle cx="3.5" cy="37.0" r="0.7" fill="#a89e9e"/><circle cx="8.2" cy="4.2" r="0.7" fill="#9a9090"/><circle cx="34.6" cy="2.3" r="0.6" fill="#9a9090"/><circle cx="16.4" cy="49.2" r="0.7" fill="#9a9090"/><circle cx="1.7" cy="44.1" r="0.6" fill="#7a7272"/><circle cx="9.1" cy="16.8" r="0.5" fill="#a89e9e"/><circle cx="38.8" cy="4.5" r="0.5" fill="#9a9090"/><circle cx="20.0" cy="2.1" r="0.5" fill="#7a7272"/><circle cx="26.5" cy="37.5" r="0.9" fill="#7a7272"/><circle cx="36.0" cy="24.7" r="0.7" fill="#9a9090"/><circle cx="2.2" cy="41.8" r="0.9" fill="#9a9090"/><circle cx="45.5" cy="37.6" r="0.5" fill="#9a9090"/><circle cx="4.3" cy="2.1" r="0.7" fill="#8a8080"/><circle cx="0.9" cy="26.6" r="0.6" fill="#a89e9e"/><circle cx="46.6" cy="44.9" r="0.5" fill="#8a8080"/><circle cx="37.3" cy="23.7" r="0.5" fill="#7a7272"/><circle cx="11.7" cy="37.8" r="0.6" fill="#a89e9e"/><circle cx="24.7" cy="19.1" r="0.9" fill="#7a7272"/><circle cx="38.3" cy="30.8" r="0.6" fill="#8a8080"/><circle cx="30.0" cy="16.6" r="0.7" fill="#9a9090"/><circle cx="0.6" cy="3.0" r="0.7" fill="#8a8080"/><circle cx="34.6" cy="33.8" r="0.7" fill="#7a7272"/><circle cx="23.2" cy="23.3" r="0.5" fill="#9a9090"/><circle cx="49.7" cy="49.7" r="0.9" fill="#9a9090"/><circle cx="45.8" cy="46.5" r="0.5" fill="#8a8080"/><circle cx="7.1" cy="26.2" r="0.7" fill="#9a9090"/><circle cx="30.2" cy="31.6" r="0.7" fill="#8a8080"/><circle cx="35.2" cy="11.6" r="0.9" fill="#a89e9e"/><circle cx="1.2" cy="0.2" r="0.9" fill="#a89e9e"/><circle cx="18.8" cy="6.0" r="0.7" fill="#8a8080"/><circle cx="47.0" cy="9.8" r="0.5" fill="#7a7272"/><circle cx="43.5" cy="3.8" r="0.9" fill="#7a7272"/><circle cx="42.7" cy="14.0" r="0.5" fill="#7a7272"/><circle cx="31.7" cy="7.4" r="0.7" fill="#a89e9e"/><circle cx="25.5" cy="9.5" r="0.7" fill="#a89e9e"/><circle cx="44.2" cy="40.6" r="0.9" fill="#9a9090"/><circle cx="36.0" cy="2.5" r="0.9" fill="#a89e9e"/><circle cx="30.7" cy="6.9" r="0.7" fill="#a89e9e"/><circle cx="2.4" cy="46.3" r="0.6" fill="#9a9090"/><circle cx="23.6" cy="17.2" r="0.7" fill="#7a7272"/><circle cx="37.0" cy="48.8" r="0.7" fill="#a89e9e"/><circle cx="32.8" cy="15.0" r="0.9" fill="#8a8080"/><circle cx="8.4" cy="8.1" r="0.6" fill="#a89e9e"/><circle cx="27.5" cy="22.6" r="0.7" fill="#a89e9e"/><circle cx="8.7" cy="27.8" r="0.7" fill="#9a9090"/><circle cx="1.0" cy="43.5" r="0.9" fill="#a89e9e"/><circle cx="37.3" cy="10.5" r="0.7" fill="#7a7272"/><circle cx="37.6" cy="24.9" r="0.7" fill="#9a9090"/><circle cx="34.3" cy="26.5" r="0.6" fill="#8a8080"/><circle cx="22.3" cy="47.7" r="0.5" fill="#9a9090"/><circle cx="1.6" cy="35.5" r="0.9" fill="#a89e9e"/><circle cx="0.0" cy="19.6" r="0.9" fill="#a89e9e"/><circle cx="26.1" cy="34.1" r="0.9" fill="#8a8080"/><circle cx="27.6" cy="2.0" r="0.6" fill="#9a9090"/><circle cx="28.5" cy="1.9" r="0.7" fill="#9a9090"/><circle cx="31.3" cy="26.4" r="0.9" fill="#8a8080"/><circle cx="5.0" cy="15.0" r="0.6" fill="#a89e9e"/><circle cx="13.0" cy="39.5" r="0.5" fill="#8a8080"/><circle cx="26.3" cy="27.4" r="0.5" fill="#a89e9e"/><circle cx="35.2" cy="15.4" r="0.5" fill="#9a9090"/><circle cx="24.9" cy="33.7" r="0.9" fill="#8a8080"/><circle cx="12.9" cy="33.4" r="0.7" fill="#9a9090"/><circle cx="24.6" cy="34.8" r="0.9" fill="#7a7272"/><circle cx="34.1" cy="9.9" r="0.7" fill="#8a8080"/><circle cx="10.3" cy="48.5" r="0.7" fill="#9a9090"/><circle cx="11.5" cy="11.1" r="0.7" fill="#8a8080"/><circle cx="47.6" cy="24.8" r="0.6" fill="#9a9090"/><circle cx="29.7" cy="46.1" r="0.5" fill="#9a9090"/><circle cx="1.2" cy="29.8" r="0.9" fill="#8a8080"/><circle cx="35.5" cy="9.2" r="0.9" fill="#7a7272"/><circle cx="36.6" cy="49.9" r="0.6" fill="#7a7272"/><circle cx="9.5" cy="32.6" r="0.9" fill="#8a8080"/><circle cx="15.6" cy="36.3" r="0.7" fill="#a89e9e"/><circle cx="48.2" cy="10.4" r="0.7" fill="#7a7272"/><circle cx="41.1" cy="21.6" r="0.5" fill="#a89e9e"/><circle cx="9.8" cy="27.1" r="0.9" fill="#9a9090"/><circle cx="31.6" cy="12.4" r="0.9" fill="#8a8080"/><circle cx="18.8" cy="23.2" r="0.5" fill="#7a7272"/><circle cx="18.1" cy="16.7" r="0.5" fill="#7a7272"/><circle cx="37.3" cy="34.5" r="0.7" fill="#7a7272"/><circle cx="0.2" cy="37.8" r="0.5" fill="#8a8080"/><circle cx="41.3" cy="5.4" r="0.9" fill="#a89e9e"/><circle cx="39.5" cy="45.7" r="0.9" fill="#9a9090"/><circle cx="46.4" cy="9.1" r="0.7" fill="#9a9090"/><circle cx="30.4" cy="16.4" r="0.7" fill="#a89e9e"/><circle cx="9.9" cy="37.6" r="0.6" fill="#a89e9e"/><circle cx="3.2" cy="1.7" r="0.7" fill="#9a9090"/><circle cx="49.0" cy="44.2" r="0.5" fill="#7a7272"/><circle cx="31.2" cy="10.4" r="0.9" fill="#a89e9e"/><circle cx="49.4" cy="48.6" r="0.6" fill="#9a9090"/><circle cx="6.6" cy="23.0" r="0.6" fill="#8a8080"/><circle cx="39.0" cy="14.7" r="0.7" fill="#7a7272"/><circle cx="44.2" cy="28.9" r="0.7" fill="#8a8080"/><circle cx="11.6" cy="40.4" r="0.9" fill="#8a8080"/><circle cx="5.1" cy="23.7" r="0.6" fill="#a89e9e"/><circle cx="45.7" cy="2.0" r="0.7" fill="#9a9090"/><circle cx="6.0" cy="9.5" r="0.6" fill="#8a8080"/><circle cx="13.0" cy="38.9" r="0.5" fill="#8a8080"/><circle cx="31.9" cy="35.5" r="0.7" fill="#9a9090"/><circle cx="1.9" cy="17.0" r="0.5" fill="#9a9090"/><circle cx="50.0" cy="1.9" r="0.6" fill="#8a8080"/><circle cx="40.9" cy="20.4" r="0.7" fill="#9a9090"/><circle cx="31.1" cy="3.9" r="0.5" fill="#a89e9e"/><circle cx="27.4" cy="3.2" r="0.5" fill="#a89e9e"/><circle cx="33.2" cy="7.7" r="0.5" fill="#9a9090"/><circle cx="19.9" cy="13.6" r="0.7" fill="#7a7272"/><circle cx="20.9" cy="2.6" r="0.7" fill="#a89e9e"/><circle cx="20.8" cy="43.2" r="0.7" fill="#9a9090"/><circle cx="19.5" cy="20.2" r="0.9" fill="#9a9090"/><circle cx="44.1" cy="23.0" r="0.6" fill="#9a9090"/><circle cx="0.7" cy="27.6" r="0.9" fill="#8a8080"/><circle cx="28.6" cy="46.4" r="0.6" fill="#9a9090"/><circle cx="3.4" cy="19.2" r="0.6" fill="#7a7272"/><circle cx="6.3" cy="47.2" r="0.9" fill="#7a7272"/><circle cx="2.7" cy="46.3" r="0.9" fill="#8a8080"/><circle cx="45.2" cy="31.0" r="0.6" fill="#9a9090"/><circle cx="31.1" cy="30.7" r="0.6" fill="#a89e9e"/><circle cx="9.1" cy="10.9" r="0.9" fill="#9a9090"/><circle cx="19.2" cy="6.2" r="0.6" fill="#9a9090"/><circle cx="2.1" cy="28.1" r="0.5" fill="#7a7272"/><circle cx="5.9" cy="30.0" r="0.7" fill="#a89e9e"/><circle cx="0.2" cy="49.3" r="0.9" fill="#9a9090"/><circle cx="22.3" cy="30.9" r="0.6" fill="#a89e9e"/><circle cx="20.0" cy="3.4" r="0.7" fill="#a89e9e"/><circle cx="32.9" cy="2.0" r="0.6" fill="#8a8080"/><circle cx="46.1" cy="15.7" r="0.5" fill="#8a8080"/><circle cx="37.6" cy="44.7" r="0.6" fill="#8a8080"/><circle cx="42.9" cy="49.8" r="0.5" fill="#9a9090"/><circle cx="6.6" cy="44.3" r="0.7" fill="#9a9090"/><circle cx="34.3" cy="36.1" r="0.6" fill="#8a8080"/><circle cx="41.7" cy="30.5" r="0.7" fill="#9a9090"/><circle cx="16.2" cy="30.7" r="0.9" fill="#9a9090"/><circle cx="12.7" cy="48.2" r="0.9" fill="#9a9090"/><circle cx="29.6" cy="30.8" r="0.6" fill="#7a7272"/><circle cx="31.8" cy="13.9" r="0.7" fill="#a89e9e"/><circle cx="8.4" cy="39.2" r="0.5" fill="#8a8080"/><circle cx="31.8" cy="18.0" r="0.9" fill="#8a8080"/><circle cx="12.6" cy="26.8" r="0.7" fill="#7a7272"/><circle cx="30.8" cy="47.9" r="0.7" fill="#7a7272"/><circle cx="15.5" cy="48.3" r="0.7" fill="#8a8080"/><circle cx="37.4" cy="11.1" r="0.7" fill="#a89e9e"/><circle cx="20.9" cy="18.2" r="0.5" fill="#9a9090"/><circle cx="24.4" cy="30.6" r="0.5" fill="#8a8080"/><circle cx="2.7" cy="28.4" r="0.7" fill="#8a8080"/><circle cx="26.2" cy="26.7" r="0.9" fill="#7a7272"/><circle cx="29.5" cy="10.2" r="0.9" fill="#9a9090"/><circle cx="6.7" cy="46.8" r="0.6" fill="#9a9090"/><circle cx="22.5" cy="3.2" r="0.6" fill="#7a7272"/><circle cx="20.1" cy="13.2" r="0.5" fill="#8a8080"/><circle cx="32.2" cy="28.1" r="0.7" fill="#a89e9e"/><circle cx="30.1" cy="25.9" r="0.9" fill="#9a9090"/><circle cx="1.3" cy="9.3" r="0.6" fill="#8a8080"/><circle cx="45.6" cy="5.2" r="0.6" fill="#9a9090"/><circle cx="32.4" cy="20.8" r="0.6" fill="#7a7272"/><circle cx="3.2" cy="31.3" r="0.9" fill="#8a8080"/><circle cx="18.8" cy="21.8" r="0.5" fill="#a89e9e"/><circle cx="8.8" cy="49.8" r="0.7" fill="#9a9090"/><circle cx="32.2" cy="6.2" r="0.7" fill="#8a8080"/><circle cx="39.4" cy="26.2" r="0.7" fill="#7a7272"/><circle cx="32.1" cy="48.3" r="0.6" fill="#8a8080"/><circle cx="44.0" cy="0.8" r="0.7" fill="#9a9090"/><circle cx="42.1" cy="10.1" r="0.6" fill="#7a7272"/><circle cx="9.6" cy="19.4" r="0.6" fill="#a89e9e"/><circle cx="45.4" cy="31.5" r="0.9" fill="#a89e9e"/><circle cx="42.0" cy="34.9" r="0.5" fill="#a89e9e"/><circle cx="47.8" cy="11.7" r="0.7" fill="#9a9090"/><circle cx="31.1" cy="8.1" r="0.6" fill="#8a8080"/><circle cx="1.5" cy="6.9" r="0.5" fill="#8a8080"/><circle cx="36.8" cy="3.3" r="0.7" fill="#9a9090"/><circle cx="40.9" cy="41.0" r="0.5" fill="#a89e9e"/><circle cx="5.4" cy="10.3" r="0.5" fill="#8a8080"/><circle cx="1.7" cy="42.4" r="0.5" fill="#7a7272"/><circle cx="23.9" cy="6.6" r="0.6" fill="#7a7272"/><circle cx="12.8" cy="14.1" r="0.7" fill="#7a7272"/><circle cx="38.5" cy="30.1" r="0.9" fill="#7a7272"/><circle cx="30.9" cy="1.5" r="0.9" fill="#8a8080"/><circle cx="35.2" cy="26.9" r="0.6" fill="#8a8080"/><circle cx="28.7" cy="14.4" r="0.9" fill="#8a8080"/><circle cx="26.2" cy="14.4" r="0.5" fill="#8a8080"/><circle cx="41.3" cy="48.4" r="0.7" fill="#7a7272"/><circle cx="28.9" cy="7.9" r="0.6" fill="#9a9090"/><circle cx="24.9" cy="5.5" r="0.5" fill="#a89e9e"/><circle cx="39.4" cy="34.9" r="0.5" fill="#7a7272"/><circle cx="44.5" cy="4.3" r="0.5" fill="#7a7272"/><circle cx="10.3" cy="13.2" r="0.6" fill="#a89e9e"/><circle cx="49.1" cy="31.5" r="0.9" fill="#9a9090"/><circle cx="26.6" cy="37.7" r="0.5" fill="#7a7272"/><circle cx="29.1" cy="26.1" r="0.9" fill="#7a7272"/><circle cx="8.5" cy="21.9" r="0.7" fill="#9a9090"/><circle cx="6.3" cy="23.1" r="0.6" fill="#9a9090"/><circle cx="13.4" cy="37.7" r="0.6" fill="#9a9090"/><circle cx="48.7" cy="36.2" r="0.7" fill="#9a9090"/><circle cx="11.8" cy="47.8" r="0.7" fill="#8a8080"/><circle cx="8.2" cy="32.9" r="0.6" fill="#a89e9e"/><circle cx="7.5" cy="7.4" r="0.7" fill="#7a7272"/><circle cx="21.7" cy="9.8" r="0.5" fill="#7a7272"/><circle cx="10.3" cy="19.4" r="0.5" fill="#8a8080"/><circle cx="25.0" cy="31.6" r="0.9" fill="#8a8080"/><circle cx="7.1" cy="30.2" r="0.9" fill="#8a8080"/><circle cx="37.0" cy="45.4" r="0.9" fill="#a89e9e"/><circle cx="42.3" cy="33.4" r="0.6" fill="#9a9090"/><circle cx="32.1" cy="22.7" r="0.7" fill="#7a7272"/><circle cx="31.4" cy="4.9" r="0.9" fill="#9a9090"/><circle cx="39.1" cy="35.7" r="0.6" fill="#7a7272"/><circle cx="42.5" cy="24.1" r="0.5" fill="#a89e9e"/><circle cx="25.9" cy="33.1" r="0.6" fill="#7a7272"/><circle cx="38.9" cy="19.4" r="0.9" fill="#8a8080"/><circle cx="1.9" cy="27.2" r="0.6" fill="#9a9090"/><circle cx="26.0" cy="5.1" r="0.9" fill="#9a9090"/><circle cx="35.9" cy="25.6" r="0.7" fill="#7a7272"/><circle cx="34.2" cy="19.6" r="0.5" fill="#7a7272"/><circle cx="31.9" cy="12.6" r="0.9" fill="#a89e9e"/><circle cx="3.1" cy="3.8" r="0.9" fill="#7a7272"/><circle cx="29.0" cy="5.5" r="0.7" fill="#a89e9e"/><circle cx="47.0" cy="26.4" r="0.6" fill="#a89e9e"/><circle cx="23.1" cy="8.2" r="0.5" fill="#9a9090"/><circle cx="23.5" cy="28.1" r="0.6" fill="#9a9090"/><circle cx="17.7" cy="31.9" r="0.9" fill="#a89e9e"/><circle cx="49.8" cy="38.0" r="0.6" fill="#a89e9e"/><circle cx="9.3" cy="0.1" r="0.7" fill="#7a7272"/><circle cx="18.1" cy="46.4" r="0.5" fill="#8a8080"/><circle cx="41.4" cy="45.3" r="0.6" fill="#7a7272"/><circle cx="31.7" cy="0.7" r="0.5" fill="#9a9090"/><circle cx="47.6" cy="32.8" r="0.7" fill="#8a8080"/><circle cx="28.9" cy="42.7" r="0.6" fill="#a89e9e"/><circle cx="17.3" cy="7.6" r="0.6" fill="#8a8080"/><circle cx="33.4" cy="44.7" r="0.7" fill="#9a9090"/><circle cx="24.7" cy="10.7" r="0.5" fill="#a89e9e"/><circle cx="33.6" cy="5.8" r="0.5" fill="#7a7272"/><circle cx="27.9" cy="24.2" r="0.6" fill="#a89e9e"/><circle cx="36.7" cy="8.0" r="0.7" fill="#a89e9e"/><circle cx="34.8" cy="24.9" r="0.7" fill="#a89e9e"/><circle cx="18.7" cy="20.9" r="0.5" fill="#9a9090"/><circle cx="31.9" cy="31.8" r="0.5" fill="#8a8080"/><circle cx="30.5" cy="34.1" r="0.7" fill="#8a8080"/><circle cx="25.5" cy="24.2" r="0.6" fill="#8a8080"/><circle cx="10.7" cy="20.8" r="0.6" fill="#7a7272"/><circle cx="4.7" cy="33.0" r="0.7" fill="#a89e9e"/><circle cx="38.9" cy="27.7" r="0.6" fill="#7a7272"/><circle cx="21.8" cy="21.1" r="0.5" fill="#7a7272"/><circle cx="14.6" cy="41.4" r="0.9" fill="#7a7272"/><circle cx="25.2" cy="13.6" r="0.7" fill="#9a9090"/><circle cx="32.7" cy="39.6" r="0.7" fill="#9a9090"/><circle cx="31.7" cy="39.2" r="0.5" fill="#a89e9e"/><circle cx="36.1" cy="44.3" r="0.5" fill="#a89e9e"/><circle cx="46.1" cy="30.4" r="0.5" fill="#a89e9e"/><circle cx="30.8" cy="31.3" r="0.5" fill="#9a9090"/><circle cx="2.0" cy="31.7" r="0.6" fill="#8a8080"/><circle cx="33.2" cy="43.5" r="0.9" fill="#8a8080"/><circle cx="45.7" cy="32.8" r="0.7" fill="#9a9090"/><circle cx="39.3" cy="28.1" r="0.7" fill="#7a7272"/><circle cx="28.3" cy="28.9" r="0.5" fill="#a89e9e"/><circle cx="28.4" cy="2.0" r="0.5" fill="#a89e9e"/><circle cx="28.8" cy="45.9" r="0.9" fill="#8a8080"/><circle cx="0.7" cy="19.4" r="0.6" fill="#a89e9e"/><circle cx="38.5" cy="27.4" r="0.5" fill="#a89e9e"/><circle cx="0.2" cy="34.2" r="0.5" fill="#8a8080"/></svg><div class="a" style="left:16.0px;top:16.0px;width:18px;height:18px;transform:rotate(45deg);background:#3a3a3a"></div></div>
 <div class="slab" style="left:153.4px;top:553.0px">いたずら書き</div>
 <div class="a sic" style="left:272.0px;top:501.8px;background:#9ff0cc"><svg class="a" style="left:0;top:0" width="50" height="50" viewBox="0 0 50 50"><path d="M3 5 C6 9 10 3 13 7 M20 2 C22 6 26 6 28 3 M33 6 C38 3 40 10 46 8 M6 14 C10 12 12 18 17 15 M26 12 C30 16 34 10 38 14 M42 16 C46 20 44 26 48 30 M2 24 C6 21 8 28 12 26 M36 22 C40 26 40 32 44 36 M4 36 C8 32 12 40 16 36 M20 44 C24 40 28 47 32 43 M36 44 C40 40 44 46 48 42 M10 46 C12 42 16 44 18 48 M28 30 C32 34 30 38 34 40" fill="none" stroke="#2f9a68" stroke-width="2" stroke-linecap="round"/></svg><div class="a" style="left:16.0px;top:16.0px;width:18px;height:18px;transform:rotate(45deg);background:#3a3a3a"></div></div>
 <div class="slab" style="left:237.0px;top:553.0px">うねり</div>
 <div class="a sic" style="left:19.7px;top:586.0px;background:#8a3fd6"><div class="a" style="left:0;top:0;width:50px;height:50px;border-radius:10px;background:repeating-linear-gradient(-45deg,#8a3fd6 0 6px,#5ab8a0 6px 9px,#8a3fd6 9px 14px);border:2px solid #c050d8"></div><div class="a" style="left:16.0px;top:16.0px;width:18px;height:18px;transform:rotate(45deg);background:#3a3a3a"></div></div>
 <div class="slab" style="left:-15.3px;top:637.0px">ビンテージ</div>
 <div class="a sic" style="left:104.0px;top:586.0px;background:linear-gradient(135deg,#f0a030,#f8c050)"><div class="a" style="left:0;top:0;width:50px;height:50px;border-radius:10px;background:repeating-linear-gradient(-45deg,transparent 0 7px,rgba(180,60,10,0.75) 7px 9px,transparent 9px 15px)"></div><div class="a" style="left:16.0px;top:16.0px;width:18px;height:18px;transform:rotate(45deg);background:#3a3a3a"></div></div>
 <div class="slab" style="left:69.0px;top:637.0px">フェニックス</div>
 <div class="a sic" style="left:188.4px;top:586.0px;background:#ef8765"><div class="a" style="left:0;top:0;width:50px;height:50px;border-radius:10px;background:radial-gradient(circle,#c65454 3.8px,transparent 4.4px) 0 -2px/13px 17px,radial-gradient(circle,#c65454 3.8px,transparent 4.4px) 6.5px 6.5px/13px 17px"></div><div class="a" style="left:16.0px;top:16.0px;width:18px;height:18px;transform:rotate(45deg);background:#3a3a3a"></div></div>
 <div class="slab" style="left:153.4px;top:637.0px">ハーフトーン</div>
 <!-- transform panel -->
 <div class="a" style="left:2px;top:888px;width:360px;height:3px;background:#121212"></div>
 <div class="a" style="left:2px;top:891px;width:360px;height:37px;background:#1f1f1f"></div>
 <div class="a" style="left:13px;top:896px;width:5px;height:24px;border-radius:3px;background:#575757"></div>
 <div class="a" style="left:27px;top:897px;width:45px;height:25px;border-radius:6px;background:#555"></div>
 <div class="rtab" style="left:34px;top:898px;color:#f2f2f2">変形</div>
 <div class="rtab" style="left:80px;top:898px;color:#a8a8a8">ナビゲータ</div>
 <div class="rtab" style="left:166px;top:898px;color:#d8d8d8">履歴</div>
 <div class="chev" style="left:328px;top:898.5px"></div>
 <div class="a" style="left:2px;top:928px;width:360px;height:165px;background:linear-gradient(200deg,#484848,#3f3f3f 50%,#383838)"></div>
 <svg class="a" style="left:0;top:0" width="362" height="1094" viewBox="1638 179 362 1094">
  <defs><linearGradient id="anc" x1="0" y1="0" x2="1" y2="1"><stop offset="0" stop-color="#6e6e6e"/><stop offset="1" stop-color="#8a8a8a"/></linearGradient></defs>
  <rect x="1668" y="1145" width="45" height="45.5" fill="url(#anc)"/>
  <g fill="#8c8c8c"><rect x="1688" y="1141.5" width="7" height="7"/><rect x="1709.5" y="1141.5" width="7" height="7"/><rect x="1664.5" y="1164" width="7" height="7"/><rect x="1688" y="1164" width="7" height="7"/><rect x="1709.5" y="1164" width="7" height="7"/><rect x="1664.5" y="1186" width="7" height="7"/><rect x="1688" y="1186" width="7" height="7"/><rect x="1709.5" y="1186" width="7" height="7"/></g>
  <rect x="1662" y="1139.7" width="13" height="12.6" fill="#ededed"/>
  <path d="M1977.5 1149 V1141 H1986.5 V1149 M1977.5 1159 V1167 H1986.5 V1159 M1976 1154 H1979 M1985 1154 H1988 M1982 1150 V1152 M1982 1156 V1158" fill="none" stroke="#bdbdbd" stroke-width="1.4"/>
  <path d="M1923.5 1236 V1229.5 H1929 M1933 1229.5 H1937 M1940 1229.5 H1943 V1235 M1943 1239 V1247 H1938" fill="none" stroke="#ddd" stroke-width="1.6"/>
  <rect x="1922.5" y="1238" width="11" height="9.5" rx="2" fill="#e6e6e6"/>
  <path d="M1958 1236.5 L1962 1240.5 L1966 1236.5" fill="none" stroke="#ddd" stroke-width="1.8"/>
 </svg>
 <div class="tlab" style="left:108px;top:951px">X:</div>
 <div class="tfld" style="left:130px;top:947px;width:80px">63.6 mm</div>
 <div class="tlab" style="left:108px;top:981px">Y:</div>
 <div class="tfld" style="left:130px;top:977px;width:80px">219.6 mm</div>
 <div class="tlab" style="left:107px;top:1017px">R:</div>
 <div class="tfld" style="left:130px;top:1013px;width:80px">0 °<span class="tarr"></span></div>
 <div class="tlab" style="left:224px;top:951px">W:</div>
 <div class="tfld" style="left:250px;top:947px;width:80px">23.8 mm</div>
 <div class="tlab" style="left:226px;top:981px">H:</div>
 <div class="tfld" style="left:250px;top:977px;width:80px">7.8 mm</div>
 <div class="tlab" style="left:227px;top:1017px">S:</div>
 <div class="tfld" style="left:250px;top:1013px;width:80px">0 °<span class="tarr"></span></div>

</div>

<div id="menu" class="a">
<div class="a" style="left:-555px;top:-52px;width:2000px;height:1301px;filter:blur(30px) brightness(0.62) saturate(3.5)">
 <div class="a" style="left:0;top:0;width:2000px;height:50px;background:#000"></div>
 <div class="a" style="left:0;top:50px;width:2000px;height:38px;background:#4b4b4b"></div>
 <div class="a" style="left:0;top:88px;width:2000px;height:42px;background:#3b3b3b"></div>
 <div class="a" style="left:0;top:130px;width:2000px;height:51px;background:#3f3f3f"></div>
 <div class="a" style="left:0;top:181px;width:2000px;height:1120px;background:#ececec"></div>
 <svg class="a" style="left:0;top:0" width="2000" height="1301" viewBox="0 0 2000 1301"><g fill="#00003f">
  <path d="M329.5 566 H477 C545 566 592 592 592 640 C592 672 560 700 503 714 L548 756 H590 V566 H672 V765 H830 V830 H496 L443 735 C434 725 425 722 411 722 V830 H329.5 Z"/>
  <path d="M830 561.5 C915 561.5 970 620 970 697 C970 780 915 833.5 830 833.5 C745 833.5 690 780 690 697 C690 620 745 561.5 830 561.5 Z"/>
  <path d="M1154.7 635.3 C1140 585 1095 561.5 1030 561.5 C940 561.5 885 625 885 697 C885 785 945 833.5 1025 833.5 C1080 833.5 1125 815 1158 792 V679.4 H1032 V734.2 H1087 V758 C1070 770 1050 776 1032 776 C990 776 972 745 972 700 C972 650 995 620 1032 620 C1055 620 1070 632 1076 649.6 Z"/>
 </g>
 <g fill="#ececec">
  <path d="M411 619 H458 C477 619 486 632 486 645 C486 660 477 672 458 672 H411 Z"/>
  <path d="M779 660 C779 630 800 618 829.5 618 C859 618 880 630 880 660 V724 C880 758 859 774 829.5 774 C800 774 779 758 779 724 Z"/>
 </g></svg>
</div>
<div class="a" style="left:0;top:0;width:381px;height:686px;background:rgba(254,254,255,0.75)"></div>
<div class="a" style="left:-555px;top:-52px;width:2000px;height:1301px;filter:blur(26px);opacity:0.08">
 <svg class="a" style="left:0;top:0" width="2000" height="1301" viewBox="0 0 2000 1301"><g fill="#3030b8">
  <path d="M329.5 566 H477 C545 566 592 592 592 640 C592 672 560 700 503 714 L548 756 H590 V566 H672 V765 H830 V830 H496 L443 735 C434 725 425 722 411 722 V830 H329.5 Z"/>
  <path d="M830 561.5 C915 561.5 970 620 970 697 C970 780 915 833.5 830 833.5 C745 833.5 690 780 690 697 C690 620 745 561.5 830 561.5 Z"/>
  <path d="M1154.7 635.3 C1140 585 1095 561.5 1030 561.5 C940 561.5 885 625 885 697 C885 785 945 833.5 1025 833.5 C1080 833.5 1125 815 1158 792 V679.4 H1032 V734.2 H1087 V758 C1070 770 1050 776 1032 776 C990 776 972 745 972 700 C972 650 995 620 1032 620 C1055 620 1070 632 1076 649.6 Z"/>
 </g>
 <g fill="#ffffff" fill-opacity="0">
  <path d="M411 619 H458 C477 619 486 632 486 645 C486 660 477 672 458 672 H411 Z"/>
  <path d="M779 660 C779 630 800 618 829.5 618 C859 618 880 630 880 660 V724 C880 758 859 774 829.5 774 C800 774 779 758 779 724 Z"/>
 </g></svg>
</div>
<div class="mi" style="top:6.5px">新規コンテナ レイヤー</div>
<svg class="a" style="left:300px;top:15px" width="60" height="16" viewBox="0 0 60 16" ><path d="M7.5 2.5 H11 L16 13.5 H20 M15 2.5 H20" fill="none" stroke="#9c9c9c" stroke-width="1.4"/><g transform="translate(25.5 1.5)" fill="none" stroke="#9c9c9c" stroke-width="1.3"><rect x="4" y="4" width="5" height="5"/><circle cx="2.2" cy="2.2" r="1.9"/><circle cx="10.8" cy="2.2" r="1.9"/><circle cx="2.2" cy="10.8" r="1.9"/><circle cx="10.8" cy="10.8" r="1.9"/></g><path d="M46.5 2 V13.5 H52.5" fill="none" stroke="#9c9c9c" stroke-width="1.4"/></svg>
<div class="mi" style="top:36.5px">シンボルを作成</div>
<svg class="a" style="left:300px;top:45px" width="60" height="16" viewBox="0 0 60 16"><path d="M13.5 1.5 L20.5 8 H17 V13.5 H10 V8 H6.5 Z" fill="none" stroke="#9c9c9c" stroke-width="1.4" stroke-linejoin="round"/><g transform="translate(25.5 1.5)" fill="none" stroke="#9c9c9c" stroke-width="1.3"><rect x="4" y="4" width="5" height="5"/><circle cx="2.2" cy="2.2" r="1.9"/><circle cx="10.8" cy="2.2" r="1.9"/><circle cx="2.2" cy="10.8" r="1.9"/><circle cx="10.8" cy="10.8" r="1.9"/></g><path d="M46.5 1.5 V13.5 M53.5 1.5 L47 8.5 M49.5 6 L54.5 13.5" fill="none" stroke="#9c9c9c" stroke-width="1.4"/></svg>
<div class="mi dis" style="top:66.5px">すべてのレイヤーを編集</div>
<div class="mi dis" style="top:96.5px">グループをレイヤーに昇格</div>
<div class="mhl" style="top:126.0px"></div>
<div class="mi hl" style="top:126.5px">カーブに変換</div>
<svg class="a" style="left:300px;top:134px" width="65" height="16" viewBox="0 0 65 16"><g transform="translate(25.5 1.5)" fill="none" stroke="#ffffff" stroke-width="1.3"><rect x="4" y="4" width="5" height="5"/><circle cx="2.2" cy="2.2" r="1.9"/><circle cx="10.8" cy="2.2" r="1.9"/><circle cx="2.2" cy="10.8" r="1.9"/><circle cx="10.8" cy="10.8" r="1.9"/></g><path d="M57.5 2 V9 H44.5 M48.5 5 L44.5 9 L48.5 13" fill="none" stroke="#ffffff" stroke-width="1.8" stroke-linejoin="round"/></svg>
<div class="msep" style="top:162.5px"></div>
<div class="mi" style="top:171.5px">オブジェクトをアートボードに変換</div>
<div class="mi dis" style="top:201.5px">アートボードをオブジェクトに変換</div>
<div class="msep" style="top:237.5px"></div>
<div class="mi" style="top:246.5px">ジオメトリ</div>
<svg class="a" style="left:350px;top:253.5px" width="12" height="14" viewBox="0 0 12 14"><path d="M2.5 1.5 L8.5 7 L2.5 12.5" fill="none" stroke="#1e1e1e" stroke-width="2.4" stroke-linecap="round" stroke-linejoin="round"/></svg>
<div class="mi" style="top:276.5px">新規ワープグループ</div>
<svg class="a" style="left:350px;top:283.5px" width="12" height="14" viewBox="0 0 12 14"><path d="M2.5 1.5 L8.5 7 L2.5 12.5" fill="none" stroke="#1e1e1e" stroke-width="2.4" stroke-linecap="round" stroke-linejoin="round"/></svg>
<div class="msep" style="top:312.5px"></div>
<div class="mi dis" style="top:321.5px">複合オブジェクトを作成</div>
<div class="mi dis" style="top:351.5px">複合オブジェクトを解除</div>
<div class="msep" style="top:387.5px"></div>
<div class="mi dis" style="top:396.5px">カーブを結合</div>
<div class="mi" style="top:426.5px">カーブを分離</div>
<div class="msep" style="top:462.5px"></div>
<div class="mi dis" style="top:471.5px">画像トレース...</div>
<div class="msep" style="top:507.5px"></div>
<div class="mi" style="top:516.5px">境界線を展開</div>
<div class="mi dis" style="top:546.5px">穴を塗りつぶす</div>
<div class="mi dis" style="top:576.5px">内側のカーブを削除</div>
<div class="mi" style="top:606.5px">塗りつぶしモード</div>
<svg class="a" style="left:350px;top:613.5px" width="12" height="14" viewBox="0 0 12 14"><path d="M2.5 1.5 L8.5 7 L2.5 12.5" fill="none" stroke="#1e1e1e" stroke-width="2.4" stroke-linecap="round" stroke-linejoin="round"/></svg>
<div class="msep" style="top:642.5px"></div>
<div class="mi dis" style="top:651.5px">キーオブジェクトでカーブをカット</div>
</div>
<!-- status -->
<div id="status" class="a">
 <svg class="a" style="left:0;top:0" width="360" height="29" viewBox="0 1272 360 29">
  <path d="M17 1280 V1292 M30 1280 L20 1286 L30 1292 Z" fill="#444" stroke="#444" stroke-width="1.5"/>
  <path d="M52 1280 L42 1286 L52 1292 Z" fill="#444"/>
  <rect x="60" y="1275" width="180" height="24" rx="6" fill="#141414"/>
  <path d="M198 1279.5 L211 1286 L198 1292.5 Z" fill="#a8a8a8"/>
  <path d="M222 1280 L231 1286 L222 1292 Z M233 1280 V1292" fill="#3a3a3a" stroke="#3a3a3a" stroke-width="1.2"/>
  <rect x="249" y="1278" width="13" height="16" rx="1.5" fill="none" stroke="#333" stroke-width="1.4"/>
  <rect x="301" y="1277.5" width="11" height="15" rx="1.5" fill="none" stroke="#bbb" stroke-width="1.4"/><path d="M305 1294 V1297.5 H316 V1282.5 H313" fill="none" stroke="#bbb" stroke-width="1.4"/>
  <rect x="329" y="1277.5" width="13" height="17" rx="1.5" fill="none" stroke="#888" stroke-width="1.4"/><path d="M332 1282 H339 M332 1285.5 H339 M332 1289 H339" stroke="#888" stroke-width="1.3"/>
 </svg>
 <div class="a" style="left:115px;top:4px;font-size:16px;color:#eee;white-space:nowrap">1 / 1</div>
 <div class="a" style="left:380px;top:6px;font-size:14px;color:#b8b8b8;white-space:nowrap">'R.LOG'が選択されています。 <b style="color:#f4f4f4">ドラッグ</b>で選択範囲を移動します。 <b style="color:#f4f4f4">クリック</b>で別のオブジェクトを選択します。空の領域を<b style="color:#f4f4f4">クリック</b>すると、選択が解除されます。<b style="color:#f4f4f4">↩</b>移動/複製の値を入力します。</div>
</div>
<div id="rstatus" class="a">
 <div class="a" style="left:9px;top:4px;font-size:16px;color:#ececec;white-space:nowrap;-webkit-text-stroke:0.3px #ececec">logo (505.6%)</div>
 <div class="a" style="left:340px;top:1px;font-size:24px;font-weight:700;color:#ddd">*</div>
</div>

</body>
</html>
